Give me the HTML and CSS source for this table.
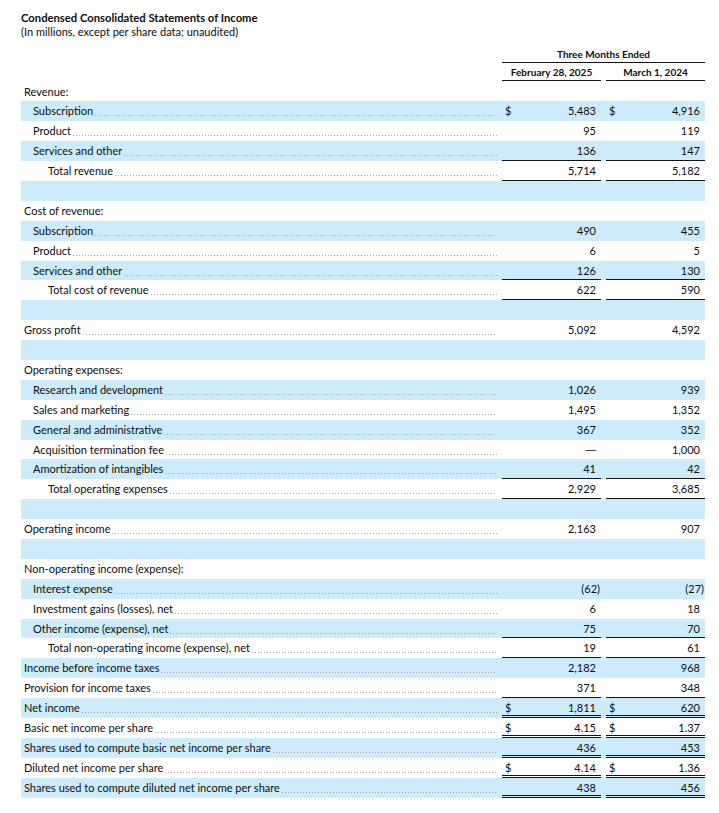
FILE: index.html
```html
<!DOCTYPE html>
<html lang="en">
<head>
<meta charset="utf-8">
<title>Condensed Consolidated Statements of Income</title>
<link rel="stylesheet" href="styles.css">
</head>
<body>
<div class="page">
  <div class="title">Condensed Consolidated Statements of Income</div>
  <div class="subtitle">(In millions, except per share data; unaudited)</div>

  <div class="hdr">
    <div class="hdr-span">Three Months Ended</div>
    <div class="hdr-cols">
      <div class="hdr-col">February 28, 2025</div>
      <div class="hdr-col">March 1, 2024</div>
    </div>
  </div>

  <div class="tbody">
    <div class="row"><div class="lbl l0"><span class="t">Revenue:</span></div><div class="num"></div><div class="num"></div></div>
    <div class="row"><div class="lbl l1"><span class="t">Subscription</span><span class="dots"></span></div><div class="num"><span class="cur">$</span><span class="v">5,483</span></div><div class="num"><span class="cur">$</span><span class="v">4,916</span></div></div>
    <div class="row"><div class="lbl l1"><span class="t">Product</span><span class="dots"></span></div><div class="num"><span class="v">95</span></div><div class="num"><span class="v">119</span></div></div>
    <div class="row"><div class="lbl l1"><span class="t">Services and other</span><span class="dots"></span></div><div class="num u1"><span class="v">136</span></div><div class="num u1"><span class="v">147</span></div></div>
    <div class="row"><div class="lbl l2"><span class="t">Total revenue</span><span class="dots"></span></div><div class="num u1"><span class="v">5,714</span></div><div class="num u1"><span class="v">5,182</span></div></div>
    <div class="row"><div class="lbl"></div><div class="num"></div><div class="num"></div></div>

    <div class="row"><div class="lbl l0"><span class="t">Cost of revenue:</span></div><div class="num"></div><div class="num"></div></div>
    <div class="row"><div class="lbl l1"><span class="t">Subscription</span><span class="dots"></span></div><div class="num"><span class="v">490</span></div><div class="num"><span class="v">455</span></div></div>
    <div class="row"><div class="lbl l1"><span class="t">Product</span><span class="dots"></span></div><div class="num"><span class="v">6</span></div><div class="num"><span class="v">5</span></div></div>
    <div class="row"><div class="lbl l1"><span class="t">Services and other</span><span class="dots"></span></div><div class="num u1"><span class="v">126</span></div><div class="num u1"><span class="v">130</span></div></div>
    <div class="row"><div class="lbl l2"><span class="t">Total cost of revenue</span><span class="dots"></span></div><div class="num u1"><span class="v">622</span></div><div class="num u1"><span class="v">590</span></div></div>
    <div class="row"><div class="lbl"></div><div class="num"></div><div class="num"></div></div>

    <div class="row"><div class="lbl l0"><span class="t">Gross profit</span><span class="dots"></span></div><div class="num"><span class="v">5,092</span></div><div class="num"><span class="v">4,592</span></div></div>
    <div class="row"><div class="lbl"></div><div class="num"></div><div class="num"></div></div>

    <div class="row"><div class="lbl l0"><span class="t">Operating expenses:</span></div><div class="num"></div><div class="num"></div></div>
    <div class="row"><div class="lbl l1"><span class="t">Research and development</span><span class="dots"></span></div><div class="num"><span class="v">1,026</span></div><div class="num"><span class="v">939</span></div></div>
    <div class="row"><div class="lbl l1"><span class="t">Sales and marketing</span><span class="dots"></span></div><div class="num"><span class="v">1,495</span></div><div class="num"><span class="v">1,352</span></div></div>
    <div class="row"><div class="lbl l1"><span class="t">General and administrative</span><span class="dots"></span></div><div class="num"><span class="v">367</span></div><div class="num"><span class="v">352</span></div></div>
    <div class="row"><div class="lbl l1"><span class="t">Acquisition termination fee</span><span class="dots"></span></div><div class="num"><span class="v dash">—</span></div><div class="num"><span class="v">1,000</span></div></div>
    <div class="row"><div class="lbl l1"><span class="t">Amortization of intangibles</span><span class="dots"></span></div><div class="num u1"><span class="v">41</span></div><div class="num u1"><span class="v">42</span></div></div>
    <div class="row"><div class="lbl l2"><span class="t">Total operating expenses</span><span class="dots"></span></div><div class="num u1"><span class="v">2,929</span></div><div class="num u1"><span class="v">3,685</span></div></div>
    <div class="row"><div class="lbl"></div><div class="num"></div><div class="num"></div></div>

    <div class="row"><div class="lbl l0"><span class="t">Operating income</span><span class="dots"></span></div><div class="num"><span class="v">2,163</span></div><div class="num"><span class="v">907</span></div></div>
    <div class="row"><div class="lbl"></div><div class="num"></div><div class="num"></div></div>

    <div class="row"><div class="lbl l0"><span class="t">Non-operating income (expense):</span></div><div class="num"></div><div class="num"></div></div>
    <div class="row"><div class="lbl l1"><span class="t">Interest expense</span><span class="dots"></span></div><div class="num"><span class="v">(62<span class="paren">)</span></span></div><div class="num"><span class="v">(27<span class="paren">)</span></span></div></div>
    <div class="row"><div class="lbl l1"><span class="t">Investment gains (losses), net</span><span class="dots"></span></div><div class="num"><span class="v">6</span></div><div class="num"><span class="v">18</span></div></div>
    <div class="row"><div class="lbl l1"><span class="t">Other income (expense), net</span><span class="dots"></span></div><div class="num u1"><span class="v">75</span></div><div class="num u1"><span class="v">70</span></div></div>
    <div class="row"><div class="lbl l2"><span class="t">Total non-operating income (expense), net</span><span class="dots"></span></div><div class="num u1"><span class="v">19</span></div><div class="num u1"><span class="v">61</span></div></div>
    <div class="row"><div class="lbl l0"><span class="t">Income before income taxes</span><span class="dots"></span></div><div class="num"><span class="v">2,182</span></div><div class="num"><span class="v">968</span></div></div>
    <div class="row"><div class="lbl l0"><span class="t">Provision for income taxes</span><span class="dots"></span></div><div class="num u1"><span class="v">371</span></div><div class="num u1"><span class="v">348</span></div></div>
    <div class="row"><div class="lbl l0"><span class="t">Net income</span><span class="dots"></span></div><div class="num u2"><span class="cur">$</span><span class="v">1,811</span></div><div class="num u2"><span class="cur">$</span><span class="v">620</span></div></div>
    <div class="row"><div class="lbl l0"><span class="t">Basic net income per share</span><span class="dots"></span></div><div class="num u2"><span class="cur">$</span><span class="v">4.15</span></div><div class="num u2"><span class="cur">$</span><span class="v">1.37</span></div></div>
    <div class="row"><div class="lbl l0"><span class="t">Shares used to compute basic net income per share</span><span class="dots"></span></div><div class="num u2"><span class="v">436</span></div><div class="num u2"><span class="v">453</span></div></div>
    <div class="row"><div class="lbl l0"><span class="t">Diluted net income per share</span><span class="dots"></span></div><div class="num u2"><span class="cur">$</span><span class="v">4.14</span></div><div class="num u2"><span class="cur">$</span><span class="v">1.36</span></div></div>
    <div class="row"><div class="lbl l0"><span class="t">Shares used to compute diluted net income per share</span><span class="dots"></span></div><div class="num u2"><span class="v">438</span></div><div class="num u2"><span class="v">456</span></div></div>
  </div>
</div>
</body>
</html>
```
FILE: styles.css
```css
* { box-sizing: border-box; }
html, body { margin: 0; padding: 0; background: #ffffff; }
body {
  font-family: Lato, "Open Sans", sans-serif;
  color: #0d0d0d;
  font-size: 11px;
}
.page {
  padding: 11px 14px 0 21px;
  width: 719px;
}
.title {
  font-weight: 700;
  font-size: 11.25px;
  line-height: 14px;
}
.subtitle {
  font-size: 11px;
  line-height: 14px;
}
.hdr {
  margin-left: 481px;
  width: 203px;
  margin-top: 5px;
  font-weight: 700;
  font-size: 10px;
}
.hdr-span {
  text-align: center;
  height: 19px;
  line-height: 16px;
  padding-top: 2px;
  border-bottom: 1px solid #141414;
}
.hdr-cols {
  display: grid;
  grid-template-columns: 99px 99px;
  column-gap: 5px;
}
.hdr-col {
  text-align: center;
  height: 18px;
  line-height: 18px;
  border-bottom: 1px solid #141414;
}
.tbody {
  margin-top: 0.5px;
}
.row {
  display: grid;
  grid-template-columns: 476px 99px 99px;
  column-gap: 5px;
  height: 19.9px;
  line-height: 19.9px;
}
.tbody .row:nth-child(even) {
  background: #cdebfb;
}
.lbl {
  display: flex;
  white-space: nowrap;
  min-width: 0;
}
.lbl.l0 { padding-left: 3px; }
.lbl.l1 { padding-left: 12px; }
.lbl.l2 { padding-left: 27px; }
.dots {
  flex: 1;
  height: 1px;
  margin-top: 14px;
  margin-left: 2px;
  background-image: linear-gradient(to right, #a9a9a9 1px, transparent 1px);
  background-size: 3px 1px;
  background-repeat: repeat-x;
}
.num {
  display: flex;
  justify-content: space-between;
  padding: 0 5px 0 3px;
  height: 19.9px;
}
.num .v { margin-left: auto; }
.num .dash { font-family: "Liberation Sans", sans-serif; font-size: 10.5px; }
.num.u1 { border-bottom: 1px solid #141414; }
.num.u2 { border-bottom: 3px double #141414; }
.paren { margin-right: -4px; }
```
